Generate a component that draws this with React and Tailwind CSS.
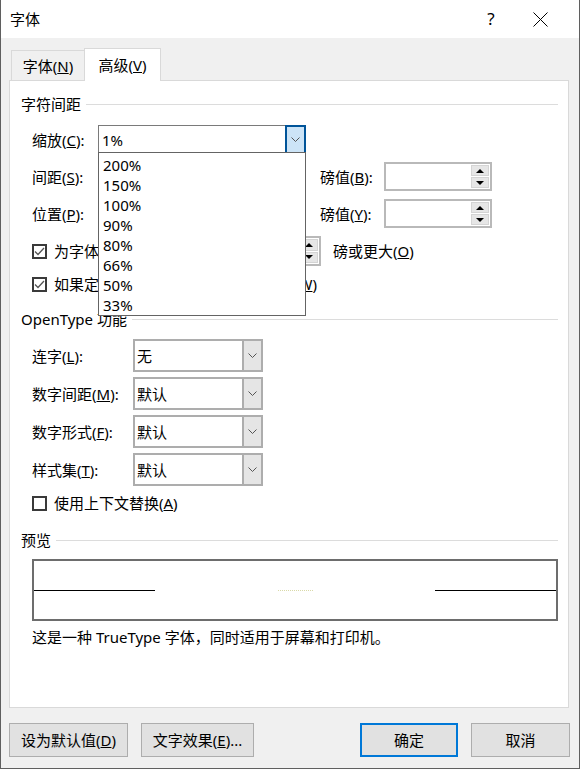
import React from "react";

const Chevron = () => (
  <svg width="9" height="5" viewBox="0 0 9 5" fill="none">
    <path d="M0.5 0.5L4.5 4.5L8.5 0.5" stroke="#555" strokeWidth="1" />
  </svg>
);

const Tri = ({ up }) => (
  <svg width="8" height="4" viewBox="0 0 8 4">
    <path d={up ? "M0 4L4 0L8 4Z" : "M0 0L8 0L4 4Z"} fill="#000" />
  </svg>
);

const Spin = ({ className }) => (
  <div className={"flex justify-end bg-white border-2 border-[#b9b9b9] p-[1px] " + className}>
    <div className="flex flex-col w-[18px] gap-px">
      <div className="flex-1 flex items-center justify-center bg-[#e6e6e6] border border-[#d4d4d4]">
        <Tri up />
      </div>
      <div className="flex-1 flex items-center justify-center bg-[#e6e6e6] border border-[#d4d4d4]">
        <Tri />
      </div>
    </div>
  </div>
);

const Combo = ({ value, className }) => (
  <div className={"flex bg-white border-2 border-[#adadad] " + className}>
    <div className="flex-1 flex items-center pl-[2px]">{value}</div>
    <div className="w-[19px] flex items-center justify-center bg-[#e5e5e5] border-l-2 border-[#adadad]">
      <Chevron />
    </div>
  </div>
);

const Check = ({ on }) => (
  <div className="w-[15px] h-[15px] border-2 border-[#3a3a3a] bg-white flex items-center justify-center">
    {on && (
      <svg width="11" height="9" viewBox="0 0 11 9" fill="none">
        <path d="M1 4.5L4 7.5L10 1" stroke="#555" strokeWidth="1.3" />
      </svg>
    )}
  </div>
);

const Heading = ({ text }) => (
  <div className="h-[20px] flex items-center pl-[11px] pr-[10px]">
    <span>{text}</span>
    <div className="flex-1 h-px bg-[#dcdcdc] ml-[5px]" />
  </div>
);

const scales = ["200%", "150%", "100%", "90%", "80%", "66%", "50%", "33%"];

export default function App() {
  return (
    <div className="w-[580px] h-[769px] flex flex-col bg-[#f0f0f0] border-x border-b border-[#5f5f5f] text-[15px] leading-[20px] text-black font-['Noto_Sans','Noto_Sans_CJK_SC',sans-serif]">
      {/* title bar */}
      <div className="h-[38px] bg-white flex items-center pl-[9px]">
        <span>字体</span>
        <span className="ml-auto text-[17px] w-[20px] text-center">?</span>
        <div className="w-[78px] flex justify-center">
          <svg width="15" height="15" viewBox="0 0 15 15">
            <path d="M0.5 0.5L14.5 14.5M14.5 0.5L0.5 14.5" stroke="#000" strokeWidth="1" />
          </svg>
        </div>
      </div>

      {/* tabs */}
      <div className="mt-[10px] h-[32px] flex items-end pl-[10px]">
        <div className="w-[73px] h-[30px] flex items-center justify-center border-t border-l border-[#d9d9d9]">
          字体(<u>N</u>)
        </div>
        <div className="relative z-10 -mb-px w-[77px] h-[33px] flex items-center justify-center bg-white border border-b-0 border-[#d9d9d9]">
          高级(<u>V</u>)
        </div>
      </div>

      {/* panel */}
      <div className="ml-[8px] w-[560px] h-[628px] bg-white border border-[#d9d9d9] flex flex-col">
        <div className="mt-[13px]">
          <Heading text="字符间距" />
        </div>

        <div className="mt-[11px] h-[29px] flex pl-[22px]">
          <div className="w-[66px] flex items-center">缩放(<u>C</u>):</div>
          <div className="relative w-[208px] flex bg-white border border-[#7a7a7a]">
            <div className="flex-1 flex items-center pl-[3px]">1%</div>
            <div className="w-[21px] -my-px -mr-px flex items-center justify-center bg-[#cce4f7] border-2 border-[#005499]">
              <Chevron />
            </div>
            {/* open list */}
            <div className="absolute z-20 left-[-1px] right-[-1px] top-[calc(100%-1px)] bg-white border border-[#646464] pt-[2px]">
              {scales.map((s) => (
                <div key={s} className="h-[20px] pl-[4px] flex items-center">
                  {s}
                </div>
              ))}
            </div>
          </div>
        </div>

        <div className="mt-[8px] h-[29px] flex pl-[22px]">
          <div className="w-[66px] flex items-center">间距(<u>S</u>):</div>
          <Combo className="w-[208px]" />
          <div className="ml-[14px] w-[64px] flex items-center">磅值(<u>B</u>):</div>
          <Spin className="w-[108px]" />
        </div>

        <div className="mt-[8px] h-[29px] flex pl-[22px]">
          <div className="w-[66px] flex items-center">位置(<u>P</u>):</div>
          <Combo className="w-[208px]" />
          <div className="ml-[14px] w-[64px] flex items-center">磅值(<u>Y</u>):</div>
          <Spin className="w-[108px]" />
        </div>

        <div className="mt-[8px] h-[30px] flex items-center pl-[22px]">
          <div className="w-[289px] h-full flex items-center">
            <Check on />
            <span className="ml-[7px]">为字体调整字间距(<u>K</u>):</span>
            <Spin className="ml-auto w-[70px] h-full" />
          </div>
          <span className="ml-[12px]">磅或更大(<u>O</u>)</span>
        </div>

        <div className="mt-[8px] h-[20px] flex items-center pl-[22px]">
          <Check on />
          <span className="ml-[7px]">如果定义了文档网格，则对齐到网格(<u>W</u>)</span>
        </div>

        <div className="mt-[15px]">
          <Heading text="OpenType 功能" />
        </div>

        {[
          ["连字(", "L", "):", "无"],
          ["数字间距(", "M", "):", "默认"],
          ["数字形式(", "F", "):", "默认"],
          ["样式集(", "T", "):", "默认"],
        ].map(([a, k, b, v], i) => (
          <div key={k} className={(i === 0 ? "mt-[10px]" : "mt-[5px]") + " h-[33px] flex pl-[22px]"}>
            <div className="w-[101px] flex items-center">
              {a}
              <u>{k}</u>
              {b}
            </div>
            <Combo value={v} className="w-[130px]" />
          </div>
        ))}

        <div className="mt-[7px] h-[20px] flex items-center pl-[22px]">
          <Check />
          <span className="ml-[7px]">使用上下文替换(<u>A</u>)</span>
        </div>

        <div className="mt-[17px]">
          <Heading text="预览" />
        </div>

        <div className="mt-[9px] ml-[22px] w-[526px] h-[62px] border-2 border-[#6d6d6d] flex items-center justify-between">
          <div className="w-[121px] h-px bg-black" />
          <div className="w-[35px] border-t border-dotted border-[#d9d9a8]" />
          <div className="w-[121px] h-px bg-black" />
        </div>

        <div className="mt-[6px] h-[20px] flex items-center pl-[22px]">
          这是一种 TrueType 字体，同时适用于屏幕和打印机。
        </div>
      </div>

      {/* buttons */}
      <div className="mt-[15px] h-[34px] ml-[8px] w-[561px] flex justify-between">
        <div className="flex gap-[13px]">
          <button className="w-[119px] h-full bg-[#e1e1e1] border border-[#adadad]">
            设为默认值(<u>D</u>)
          </button>
          <button className="w-[113px] h-full bg-[#e1e1e1] border border-[#adadad]">
            文字效果(<u>E</u>)...
          </button>
        </div>
        <div className="flex gap-[13px]">
          <button className="w-[98px] h-full bg-[#e1e1e1] border-2 border-[#0078d7]">确定</button>
          <button className="w-[99px] h-full bg-[#e1e1e1] border border-[#adadad]">取消</button>
        </div>
      </div>
    </div>
  );
}
